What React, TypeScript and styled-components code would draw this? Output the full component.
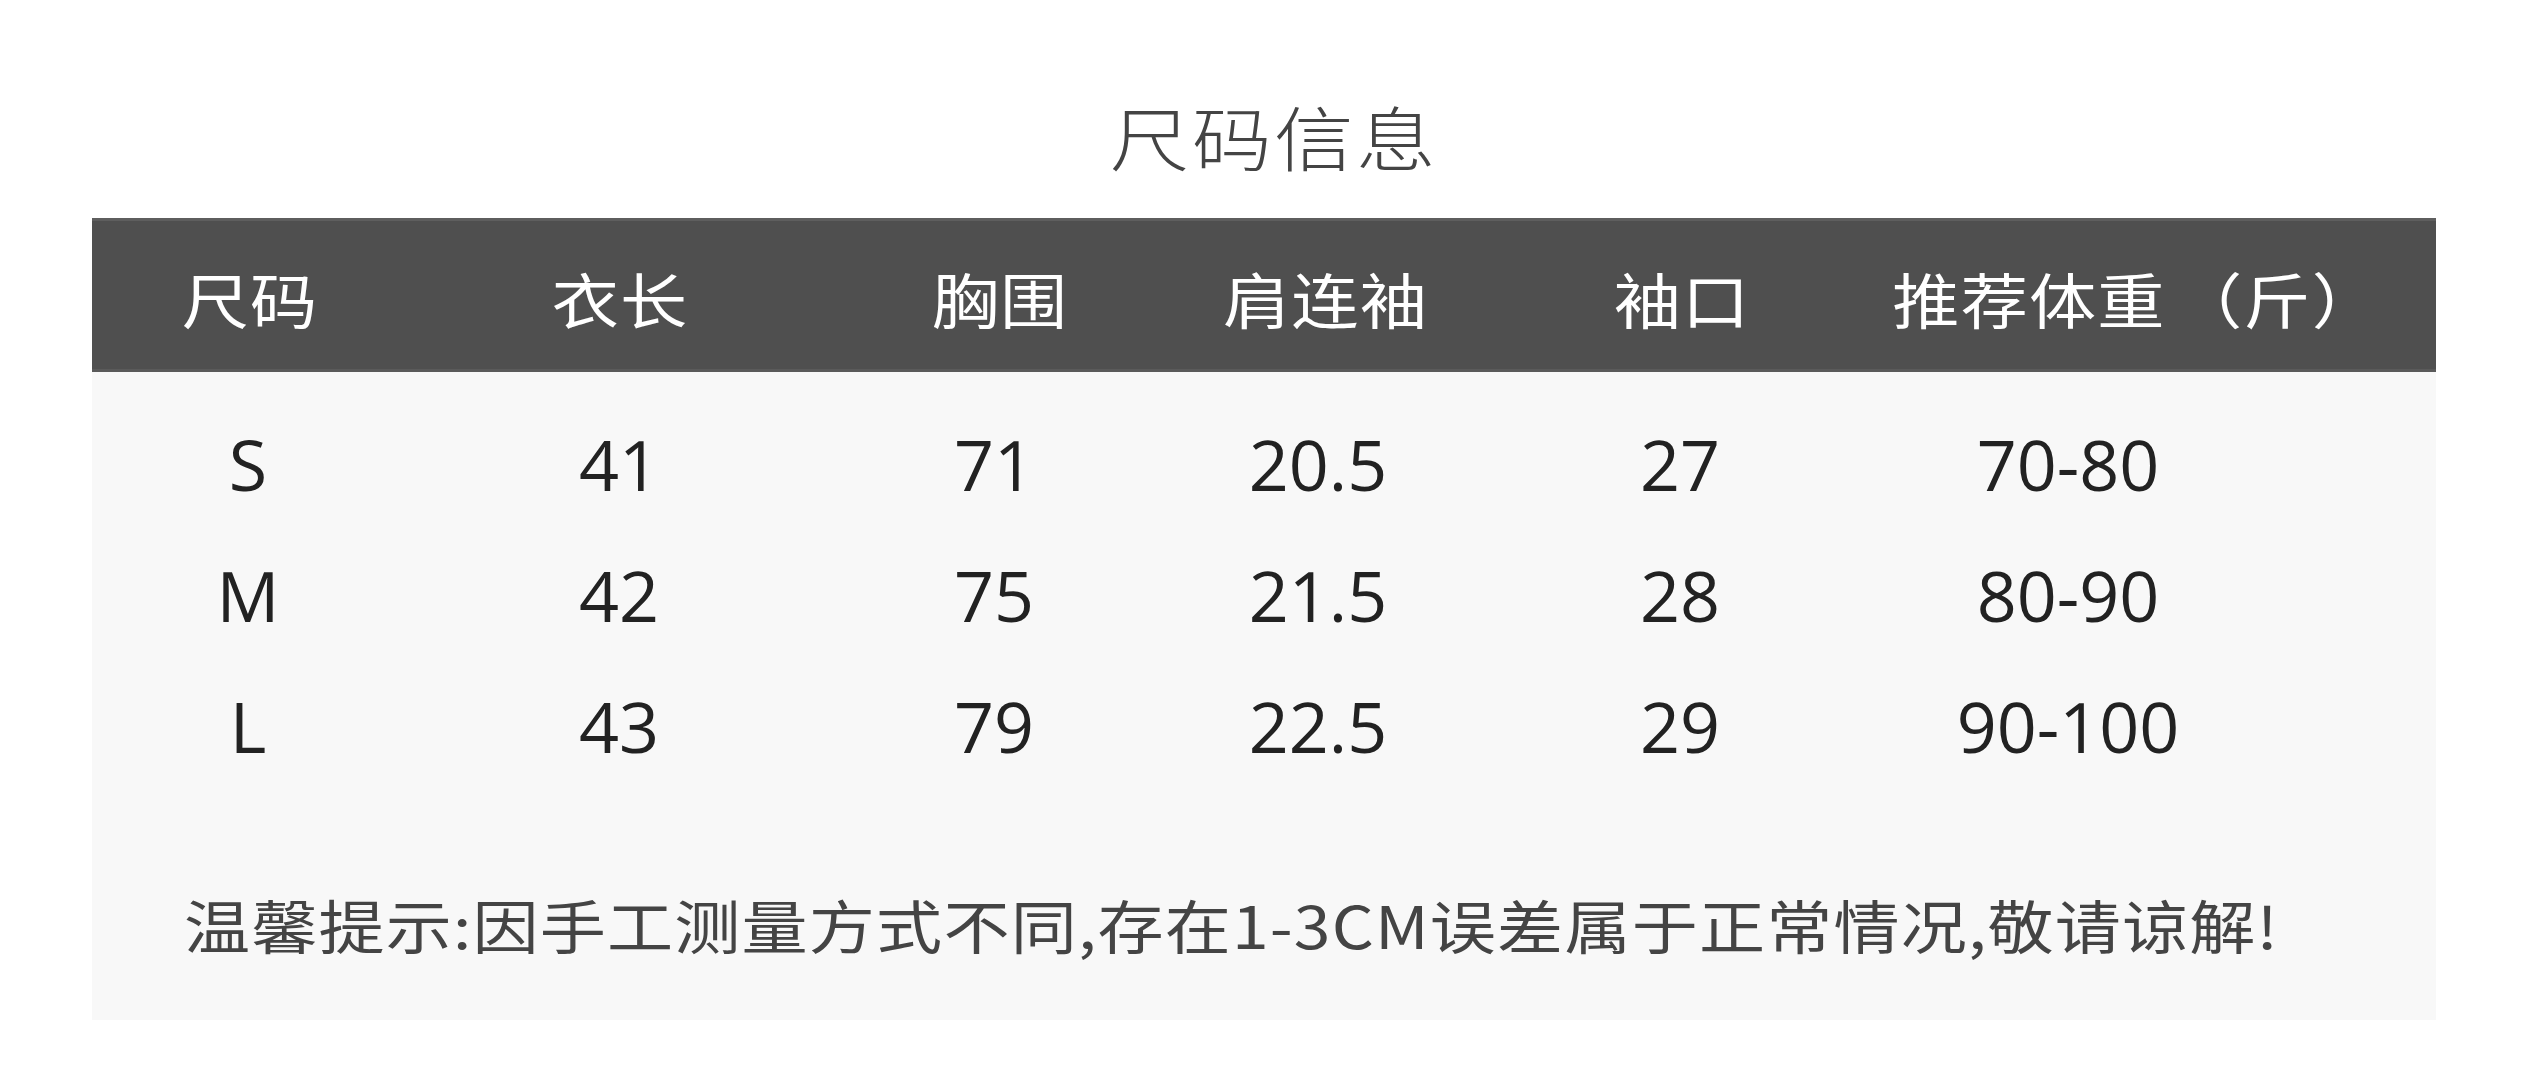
import React from 'react';
import styled, { createGlobalStyle } from 'styled-components';

const GlobalStyle = createGlobalStyle`
  html, body {
    margin: 0;
    padding: 0;
    background: #ffffff;
  }
  body {
    font-family: "Noto Sans CJK SC", "Noto Sans", sans-serif;
  }
`;

const Page = styled.div`
  width: 2532px;
  height: 1080px;
  box-sizing: border-box;
  padding: 0 96px 0 92px;
  display: flex;
  flex-direction: column;
  overflow: hidden;
`;

const TitleWrap = styled.div`
  height: 218px;
  box-sizing: border-box;
  padding: 96px 0 0 20px;
  display: flex;
  justify-content: center;
  align-items: flex-start;
`;

const Title = styled.h1`
  margin: 0;
  font-family: "Noto Sans CJK SC", sans-serif;
  font-weight: 300;
  font-size: 70px;
  line-height: 80px;
  letter-spacing: 2px;
  color: #444444;
  transform: scaleX(1.14);
`;

const HeaderBar = styled.div`
  height: 154px;
  box-sizing: border-box;
  background: #4f4f4f;
  border-top: 3px solid #5e5e5e;
  border-bottom: 3px solid #5a5a5a;
  display: grid;
  grid-template-columns: 316px 424px 336px 314px 400px 294px 1fr;
  align-items: center;
`;

const HeadCell = styled.div<{ $end?: boolean }>`
  justify-self: ${p => (p.$end ? 'end' : 'center')};
  margin-right: ${p => (p.$end ? '56px' : '0')};
  font-family: "Noto Sans CJK SC", sans-serif;
  font-size: 60px;
  letter-spacing: 1px;
  line-height: 1;
  color: #ffffff;
  margin-top: 6px;
  transform: scaleX(1.12);
  transform-origin: ${p => (p.$end ? 'right center' : 'center')};
`;

const Panel = styled.div`
  height: 648px;
  box-sizing: border-box;
  background: #f8f8f8;
  padding-top: 26px;
  display: flex;
  flex-direction: column;
  align-items: stretch;
`;

const Row = styled.div`
  height: 131px;
  display: grid;
  grid-template-columns: 312px 430px 320px 328px 396px 380px;
  align-items: center;
`;

const Cell = styled.div`
  justify-self: center;
  font-family: "Open Sans", "Noto Sans", sans-serif;
  font-size: 70px;
  line-height: 1;
  color: #222222;
`;

const Note = styled.p`
  align-self: flex-start;
  margin: 93px 0 0 92px;
  font-family: "Noto Sans CJK SC", sans-serif;
  font-size: 58px;
  line-height: 80px;
  letter-spacing: 1px;
  color: #444444;
  white-space: nowrap;
  transform: scaleX(1.14);
  transform-origin: left center;
`;

const headers = ['尺码', '衣长', '胸围', '肩连袖', '袖口', '推荐体重'];

const rows = [
  ['S', '41', '71', '20.5', '27', '70-80'],
  ['M', '42', '75', '21.5', '28', '80-90'],
  ['L', '43', '79', '22.5', '29', '90-100'],
];

const App = () => {
  return (
    <Page>
      <GlobalStyle />
      <TitleWrap>
        <Title>尺码信息</Title>
      </TitleWrap>
      <HeaderBar>
        {headers.map(h => (
          <HeadCell key={h}>{h}</HeadCell>
        ))}
        <HeadCell $end>（斤）</HeadCell>
      </HeaderBar>
      <Panel>
        {rows.map(r => (
          <Row key={r[0]}>
            {r.map((v, i) => (
              <Cell key={i}>{v}</Cell>
            ))}
          </Row>
        ))}
        <Note>温馨提示:因手工测量方式不同,存在1-3CM误差属于正常情况,敬请谅解!</Note>
      </Panel>
    </Page>
  );
};

export default App;
